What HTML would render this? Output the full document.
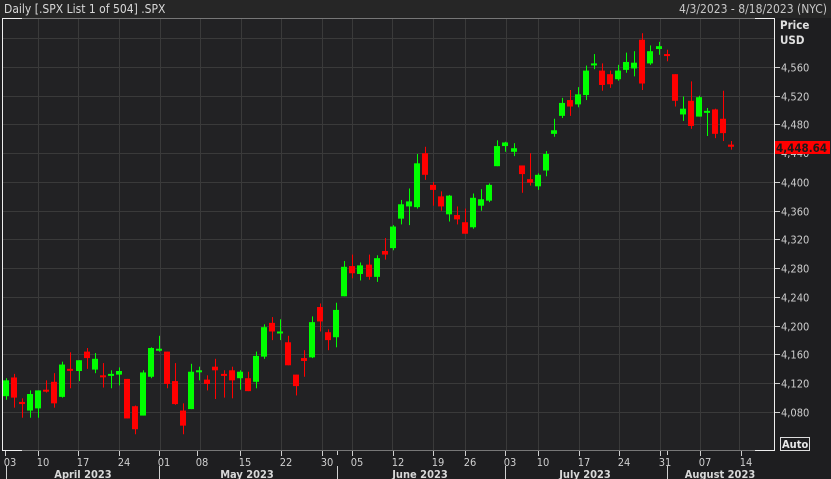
<!DOCTYPE html>
<html><head><meta charset="utf-8"><style>
html,body{margin:0;padding:0;background:#1e1e20;width:831px;height:479px;overflow:hidden;font-family:"DejaVu Sans Condensed","Liberation Sans Narrow","Liberation Sans",sans-serif;}
svg{display:block}
</style></head><body>
<svg id="s" width="831" height="479" xmlns="http://www.w3.org/2000/svg" font-family="DejaVu Sans Condensed, Liberation Sans, sans-serif">
<rect x="0" y="0" width="831" height="479" fill="#1e1e20"/>
<rect x="0" y="0" width="831" height="18" fill="#262626"/>
<text x="4" y="13" font-size="12" fill="#d8d8d8">Daily [.SPX List 1 of 504] .SPX</text>
<text x="827" y="13" font-size="12" fill="#c8c8c8" text-anchor="end">4/3/2023 - 8/18/2023 (NYC)</text>
<rect x="2" y="18" width="772" height="433" fill="#222224"/>
<g id="grid" stroke="#3a3a3a" stroke-width="1"></g>
<line x1="2" y1="18.5" x2="774" y2="18.5" stroke="#777"/>
<line x1="2" y1="450.5" x2="774" y2="450.5" stroke="#777"/>
<line x1="2.5" y1="18" x2="2.5" y2="451" stroke="#eee"/>
<line x1="774.5" y1="18" x2="774.5" y2="451" stroke="#eee"/>
<line x1="2" y1="18.5" x2="22" y2="18.5" stroke="#eee"/>
<line x1="755" y1="18.5" x2="774" y2="18.5" stroke="#eee"/>
<line x1="2" y1="450.5" x2="22" y2="450.5" stroke="#eee"/>
<line x1="755" y1="450.5" x2="774" y2="450.5" stroke="#eee"/>
<g id="c"></g>
<g id="ax" font-size="11" fill="#cfcfcf"></g>
<text x="780" y="29" font-size="11.5" font-weight="bold" fill="#e0e0e0">Price</text>
<text x="780" y="44" font-size="11.5" font-weight="bold" fill="#e0e0e0">USD</text>
<rect x="775" y="141" width="55" height="13" fill="#ff0000"/>
<text x="776" y="152" font-size="11.5" font-weight="bold" fill="#1a1a1a">4,448.64</text>
<rect x="780.5" y="437.5" width="29" height="13" fill="none" stroke="#ddd"/>
<text x="782" y="448" font-size="11" font-weight="bold" fill="#e8e8e8">Auto</text>
<g id="bx" font-size="11" fill="#cfcfcf"></g>
</svg>
<script>
var ns="http://www.w3.org/2000/svg";
function el(p,t,a,txt){var e=document.createElementNS(ns,t);for(var k in a)e.setAttribute(k,a[k]);if(txt)e.textContent=txt;p.appendChild(e);return e;}
function Y(p){return 67+(4560-p)*0.7187;}
var g=document.getElementById('grid'),ax=document.getElementById('ax'),bx=document.getElementById('bx');
for(var p=4080;p<=4600;p+=40){var y=Math.round(Y(p))+0.5;el(g,'line',{x1:3,y1:y,x2:774,y2:y});
 if(p<=4560&&p!=4440){el(ax,'line',{x1:775,y1:y,x2:780,y2:y,stroke:'#cfcfcf'});el(ax,'text',{x:781,y:y+4},(p+'').replace(/(\d)(\d{3})$/,'$1,$2'));}}
el(ax,'text',{x:781,y:Math.round(Y(4440))+4},'4,440');
var vx=[38,78,119,160,200,241,281,322,352,392,433,465,506,538,579,619,660,700,739];
vx.forEach(function(x){el(g,'line',{x1:x+0.5,y1:19,x2:x+0.5,y2:450});});
var tk=[[5,'03'],[38,'10'],[78,'17'],[119,'24'],[159,'01'],[197,'08'],[240,'15'],[281,'22'],[322,'30'],[352,'05'],[393,'12'],[433,'19'],[465,'26'],[505,'03'],[538,'10'],[579,'17'],[619,'24'],[660,'31'],[700,'07'],[741,'14']];
tk.forEach(function(t){el(bx,'line',{x1:t[0]+0.5,y1:451,x2:t[0]+0.5,y2:456,stroke:'#cfcfcf'});el(bx,'text',{x:t[0]+5,y:466,'text-anchor':'middle'},t[1]);});
[337,667].forEach(function(x){el(bx,'line',{x1:x+0.5,y1:451,x2:x+0.5,y2:455,stroke:'#cfcfcf'});});
[6,159,337,505,667].forEach(function(x){el(bx,'line',{x1:x+0.5,y1:466,x2:x+0.5,y2:479,stroke:'#cfcfcf'});});
[[83,'April 2023'],[247,'May 2023'],[420,'June 2023'],[585,'July 2023'],[720,'August 2023']].forEach(function(m){el(bx,'text',{x:m[0],y:478,'text-anchor':'middle','font-weight':'bold','fill':'#d8d8d8'},m[1]);});
var d=[[4102,4127,4097,4124],[4128,4133,4086,4100],[4094,4099,4072,4091],[4082,4110,4072,4105],[4085,4110,4072,4110],[4111,4124,4107,4109],[4122,4134,4086,4092],[4101,4150,4100,4146],[4140,4163,4113,4138],[4137,4152,4123,4152],[4164,4169,4140,4155],[4139,4162,4134,4154],[4131,4148,4114,4130],[4132,4138,4113,4133],[4132,4142,4117,4137],[4126,4126,4071,4071],[4088,4089,4049,4056],[4075,4138,4075,4135],[4129,4170,4127,4169],[4166,4186,4164,4168],[4164,4164,4113,4119],[4123,4148,4090,4091],[4082,4092,4049,4061],[4084,4147,4084,4136],[4136,4143,4124,4138],[4125,4131,4110,4119],[4143,4154,4098,4138],[4133,4138,4100,4131],[4138,4143,4099,4124],[4127,4138,4111,4136],[4127,4136,4109,4109],[4122,4164,4113,4158],[4157,4202,4154,4198],[4204,4212,4180,4192],[4190,4209,4180,4192],[4177,4186,4145,4145],[4132,4132,4103,4116],[4155,4166,4129,4151],[4156,4213,4155,4205],[4226,4231,4192,4206],[4191,4195,4166,4180],[4184,4232,4170,4222],[4241,4290,4241,4282],[4283,4299,4266,4273],[4272,4288,4263,4284],[4285,4299,4264,4268],[4268,4298,4261,4294],[4304,4322,4292,4299],[4308,4340,4305,4338],[4349,4375,4341,4369],[4366,4391,4340,4373],[4365,4439,4363,4426],[4440,4449,4403,4410],[4396,4400,4367,4389],[4380,4387,4360,4366],[4355,4382,4345,4381],[4354,4366,4341,4348],[4344,4363,4328,4328],[4337,4384,4335,4378],[4367,4390,4360,4376],[4374,4398,4372,4396],[4422,4458,4422,4450],[4450,4456,4442,4455],[4442,4454,4436,4447],[4423,4423,4385,4411],[4404,4440,4395,4399],[4394,4412,4389,4410],[4416,4443,4408,4439],[4467,4488,4463,4472],[4492,4517,4489,4510],[4514,4528,4492,4505],[4508,4532,4504,4522],[4521,4562,4514,4555],[4563,4578,4557,4565],[4555,4565,4527,4535],[4550,4555,4531,4536],[4543,4563,4541,4555],[4556,4580,4552,4567],[4558,4582,4547,4566],[4598,4607,4528,4537],[4565,4590,4563,4582],[4585,4595,4577,4589],[4578,4584,4568,4576],[4550,4550,4505,4513],[4494,4519,4485,4502],[4513,4540,4474,4478],[4491,4520,4491,4518],[4498,4503,4464,4499],[4501,4502,4461,4467],[4488,4527,4457,4468],[4452,4457,4445,4449]];
var c=document.getElementById('c');
var step=725/(d.length-1);
d.forEach(function(k,i){var x=Math.round(6+i*step);var up=k[3]>=k[0];var col=up?'#00ff00':'#ff0000';
 el(c,'rect',{x:x,y:Y(k[1]),width:1,height:Math.max(1,Y(k[2])-Y(k[1])),fill:col});
 var t=Y(Math.max(k[0],k[3])),b=Y(Math.min(k[0],k[3]));
 el(c,'rect',{x:x-3,y:t,width:6,height:Math.max(2,b-t),fill:col});});
</script>
</body></html>
